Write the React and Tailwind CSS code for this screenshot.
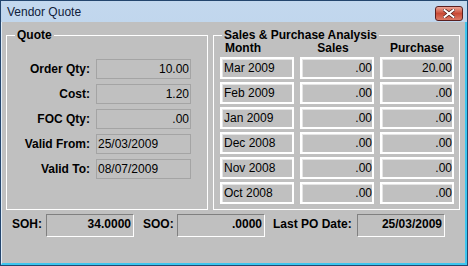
import React from "react";

const font = { fontFamily: '"Liberation Sans", Arial, sans-serif' };

const quoteRows = [
  { label: "Order Qty:", value: "10.00", align: "right" },
  { label: "Cost:", value: "1.20", align: "right" },
  { label: "FOC Qty:", value: ".00", align: "right" },
  { label: "Valid From:", value: "25/03/2009", align: "left" },
  { label: "Valid To:", value: "08/07/2009", align: "left" },
];

const salesRows = [
  ["Mar 2009", ".00", "20.00"],
  ["Feb 2009", ".00", ".00"],
  ["Jan 2009", ".00", ".00"],
  ["Dec 2008", ".00", ".00"],
  ["Nov 2008", ".00", ".00"],
  ["Oct 2008", ".00", ".00"],
];

const GroupBox = ({ title, className, children }) => (
  <div className={`relative border border-white ${className}`}>
    <span className="absolute -top-[8px] left-[8px] bg-[#c0c0c0] px-[2px] text-[12px] font-bold leading-[14px] text-black">
      {title}
    </span>
    {children}
  </div>
);

const Cell = ({ children, right }) => (
  <div
    className={`flex h-[22px] w-[74px] items-center border-2 border-white shadow-[inset_1px_1px_0_#e4e4e4] text-[12px] leading-[14px] text-black ${right ? "justify-end" : "pl-[2px]"}`}
  >
    {children}
  </div>
);

const SunkenField = ({ value }) => (
  <div className="flex h-[23px] w-[88px] justify-end border border-t-[#808080] border-l-[#808080] border-b-white border-r-white pr-[2px] pt-[2px] text-[12px] font-bold leading-[14px] text-black">
    {value}
  </div>
);

export default function App() {
  return (
    <div
      style={font}
      className="flex h-[266px] w-[468px] flex-col overflow-hidden border border-[#24466e] bg-gradient-to-b from-[#c3d8ee] to-[#a9c6e4]"
    >
      {/* title bar */}
      <div className="flex h-[21px] shrink-0 items-center justify-between pl-[6px] pr-[4px]">
        <span className="text-[12px] leading-[14px] text-[#10203a]">Vendor Quote</span>
        <div className="mt-[3px] flex h-[15px] w-[28px] items-center justify-center rounded-[3px] border border-[#5a1f1f] bg-gradient-to-b from-[#eba496] via-[#c94a36] to-[#dc7a66]">
          <svg width="12" height="9" viewBox="0 0 12 9">
            <path
              d="M1.5 1 L10.5 8 M10.5 1 L1.5 8"
              stroke="#4a1a16"
              strokeWidth="3.4"
              strokeLinecap="square"
            />
            <path
              d="M1.5 1 L10.5 8 M10.5 1 L1.5 8"
              stroke="#ffffff"
              strokeWidth="2"
              strokeLinecap="square"
            />
          </svg>
        </div>
      </div>

      {/* body */}
      <div className="flex flex-1 flex-col border-l border-l-[#e0ecf7] border-r-2 border-b-2 border-r-[#3cc6ef] border-b-[#3cc6ef] bg-[#c0c0c0] pl-[4px]">
        <div className="mt-[13px] flex gap-[5px]">
          <GroupBox title="Quote" className="h-[175px] w-[202px]">
            <div className="flex flex-col gap-[5px] pt-[23px]">
              {quoteRows.map((r) => (
                <div key={r.label} className="flex items-center">
                  <div className="w-[83px] text-right text-[12px] font-bold leading-[14px] text-black">
                    {r.label}
                  </div>
                  <div
                    className={`ml-[6px] flex h-[20px] w-[95px] items-center border border-[#a4a4a4] text-[12px] leading-[14px] text-black ${r.align === "right" ? "justify-end pr-[1px]" : "pl-[1px]"}`}
                  >
                    {r.value}
                  </div>
                </div>
              ))}
            </div>
          </GroupBox>

          <GroupBox title="Sales & Purchase Analysis" className="h-[175px] w-[247px]">
            <div className="flex flex-col pl-[6px]">
              <div className="mt-[5px] flex gap-[6px] text-[12px] font-bold leading-[14px] text-black">
                <div className="w-[74px] pl-[5px]">Month</div>
                <div className="w-[74px] pr-[8px] text-center">Sales</div>
                <div className="w-[74px] text-center">Purchase</div>
              </div>
              <div className="mt-[2px] flex flex-col gap-[3px]">
                {salesRows.map((row) => (
                  <div key={row[0]} className="flex gap-[6px]">
                    <Cell>{row[0]}</Cell>
                    <Cell right>{row[1]}</Cell>
                    <Cell right>{row[2]}</Cell>
                  </div>
                ))}
              </div>
            </div>
          </GroupBox>
        </div>

        {/* footer row */}
        <div className="mt-[4px] flex items-start pl-[6px] text-[12px] font-bold leading-[14px] text-black">
          <div className="w-[34px] pt-[3px]">SOH:</div>
          <SunkenField value="34.0000" />
          <div className="ml-[9px] w-[34px] pt-[3px]">SOO:</div>
          <SunkenField value=".0000" />
          <div className="ml-[8px] w-[84px] pt-[3px]">Last PO Date:</div>
          <SunkenField value="25/03/2009" />
        </div>
      </div>
    </div>
  );
}
